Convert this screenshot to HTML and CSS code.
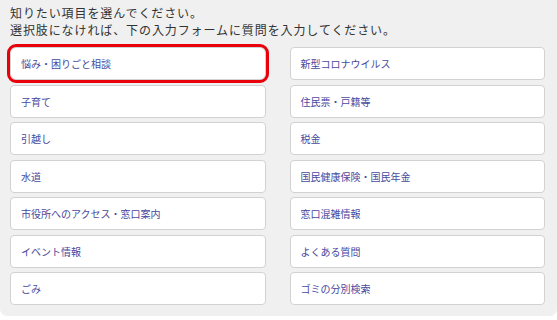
FILE: index.html
```html
<!DOCTYPE html>
<html lang="ja">
<head>
    <meta charset="UTF-8">
    <meta name="viewport" content="width=device-width, initial-scale=1.0">
    <title>項目選択</title>
    <link rel="stylesheet" href="styles.css">
</head>
<body>
    <div class="panel">
        <p class="lead">知りたい項目を選んでください。<br>選択肢になければ、下の入力フォームに質問を入力してください。</p>
        <div class="choices">
            <button class="choice selected" type="button">悩み・困りごと相談</button>
            <button class="choice" type="button">新型コロナウイルス</button>
            <button class="choice" type="button">子育て</button>
            <button class="choice" type="button">住民票・戸籍等</button>
            <button class="choice" type="button">引越し</button>
            <button class="choice" type="button">税金</button>
            <button class="choice" type="button">水道</button>
            <button class="choice" type="button">国民健康保険・国民年金</button>
            <button class="choice" type="button">市役所へのアクセス・窓口案内</button>
            <button class="choice" type="button">窓口混雑情報</button>
            <button class="choice" type="button">イベント情報</button>
            <button class="choice" type="button">よくある質問</button>
            <button class="choice" type="button">ごみ</button>
            <button class="choice" type="button">ゴミの分別検索</button>
        </div>
    </div>
</body>
</html>
```

FILE: styles.css
```css
body {
    margin: 0;
    background-color: #ffffff;
    font-family: "Noto Sans CJK JP", "Noto Sans", sans-serif;
}
.panel {
    background-color: #eff0ef;
    padding: 4px 12px 11px 10px;
    border-radius: 0 0 7px 7px;
}
.lead {
    margin: 0 0 9px 0;
    font-size: 12px;
    line-height: 17px;
    letter-spacing: 0.9px;
    color: #333333;
}
.choices {
    display: grid;
    grid-template-columns: 1fr 1fr;
    column-gap: 24px;
    row-gap: 4.5px;
}
.choice {
    height: 33px;
    padding: 0 10px;
    background-color: #ffffff;
    border: 1px solid #d2d2d2;
    border-radius: 4px;
    text-align: left;
    font-family: inherit;
    font-size: 10px;
    color: #48489e;
    cursor: pointer;
}
.choice.selected {
    outline: 3px solid #e8000b;
    outline-offset: 0;
    border-radius: 6px;
}
```
